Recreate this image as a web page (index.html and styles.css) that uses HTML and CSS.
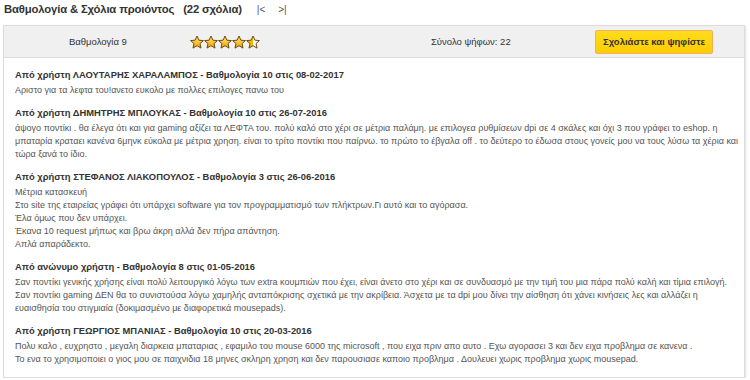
FILE: index.html
```html
<!DOCTYPE html>
<html lang="el">
<head>
  <meta charset="UTF-8">
  <title>Βαθμολογία & Σχόλια</title>
  <link rel="stylesheet" href="styles.css">
</head>
<body>

<div class="reviews-head">
  <h2>Βαθμολογία &amp; Σχόλια προιόντος <span class="count">(22 σχόλια)</span></h2>
  <a href="#" class="pager">|&lt;</a>
  <a href="#" class="pager">&gt;|</a>
</div>

<div class="reviews-box">
  <div class="summary">
    <div class="score">Βαθμολογία 9</div>
    <div class="stars">
      <svg width="70" height="16" viewBox="0 0 70 16">
        <defs>
          <linearGradient id="gold" x1="0" y1="0" x2="0" y2="1">
            <stop offset="0" stop-color="#ffe680"/>
            <stop offset="1" stop-color="#f0a400"/>
          </linearGradient>
          <linearGradient id="half" x1="0" y1="0" x2="1" y2="0">
            <stop offset="0.5" stop-color="#f5b800"/>
            <stop offset="0.5" stop-color="#ffffff"/>
          </linearGradient>
          <path id="star" d="M7 1 L8.9 5.2 L13.4 5.6 L10 8.6 L11 13.1 L7 10.7 L3 13.1 L4 8.6 L0.6 5.6 L5.1 5.2 Z"/>
        </defs>
        <use href="#star" x="0" y="1" fill="url(#gold)" stroke="#6b4a10" stroke-width="1"/>
        <use href="#star" x="14" y="1" fill="url(#gold)" stroke="#6b4a10" stroke-width="1"/>
        <use href="#star" x="28" y="1" fill="url(#gold)" stroke="#6b4a10" stroke-width="1"/>
        <use href="#star" x="42" y="1" fill="url(#gold)" stroke="#6b4a10" stroke-width="1"/>
        <use href="#star" x="56" y="1" fill="url(#half)" stroke="#6b4a10" stroke-width="1"/>
      </svg>
    </div>
    <div class="votes">Σύνολο ψήφων: 22</div>
    <a href="#" class="vote-btn">Σχολιάστε και ψηφίστε</a>
  </div>

  <div class="review-list">
    <div class="review">
      <div class="review-title">Από χρήστη ΛΑΟΥΤΑΡΗΣ ΧΑΡΑΛΑΜΠΟΣ - Βαθμολογία 10 στις 08-02-2017</div>
      <div class="review-text">Αριστο για τα λεφτα του!ανετο ευκολο με πολλες επιλογες πανω του</div>
    </div>

    <div class="review">
      <div class="review-title">Από χρήστη ΔΗΜΗΤΡΗΣ ΜΠΛΟΥΚΑΣ - Βαθμολογία 10 στις 26-07-2016</div>
      <div class="review-text">άψογο ποντίκι . θα έλεγα ότι και για gaming αξίζει τα ΛΕΦΤΑ του. πολύ καλό στο χέρι σε μέτρια παλάμη. με επιλογεα ρυθμίσεων dpi σε 4 σκάλες και όχι 3 που γράφει το eshop. η<br>μπαταρία κραταει κανένα 6μηνκ εύκολα με μέτρια χρηση. είναι το τρίτο ποντίκι που παίρνω. το πρώτο το έβγαλα off . το δεύτερο το έδωσα στους γονείς μου να τους λύσω τα χέρια και<br>τώρα ξανά το ίδιο.</div>
    </div>

    <div class="review">
      <div class="review-title">Από χρήστη ΣΤΕΦΑΝΟΣ ΛΙΑΚΟΠΟΥΛΟΣ - Βαθμολογία 3 στις 26-06-2016</div>
      <div class="review-text">Μέτρια κατασκευή<br>Στο site της εταιρείας γράφει ότι υπάρχει software για τον προγραμματισμό των πλήκτρων.Γι αυτό και το αγόρασα.<br>Έλα όμως που δεν υπάρχει.<br>Έκανα 10 request μήπως και βρω άκρη αλλά δεν πήρα απάντηση.<br>Απλά απαράδεκτο.</div>
    </div>

    <div class="review">
      <div class="review-title">Από ανώνυμο χρήστη - Βαθμολογία 8 στις 01-05-2016</div>
      <div class="review-text">Σαν ποντίκι γενικής χρήσης είναι πολύ λειτουργικό λόγω των extra κουμπιών που έχει, είναι άνετο στο χέρι και σε συνδυασμό με την τιμή του μια πάρα πολύ καλή και τίμια επιλογή.<br>Σαν ποντίκι gaming ΔΕΝ θα το συνιστούσα λόγω χαμηλής ανταπόκρισης σχετικά με την ακρίβεια. Άσχετα με τα dpi μου δίνει την αίσθηση ότι χάνει κινήσεις λες και αλλάζει η<br>ευαισθησία του στιγμιαία (δοκιμασμένο με διαφορετικά mousepads).</div>
    </div>

    <div class="review">
      <div class="review-title">Από χρήστη ΓΕΩΡΓΙΟΣ ΜΠΑΝΙΑΣ - Βαθμολογία 10 στις 20-03-2016</div>
      <div class="review-text">Πολυ καλο , ευχρηστο , μεγαλη διαρκεια μπαταριας , εφαμιλο του mouse 6000 της microsoft , που ειχα πριν απο αυτο . Εχω αγορασει 3 και δεν ειχα προβλημα σε κανενα .<br>Το ενα το χρησιμοποιει ο γιος μου σε παιχνιδια 18 μηνες σκληρη χρηση και δεν παρουσιασε καποιο προβλημα . Δουλευει χωρις προβλημα χωρις mousepad.</div>
    </div>
  </div>
</div>

</body>
</html>
```

FILE: styles.css
```css
/* Σχόλια προϊόντος */
* {
  box-sizing: border-box;
}

body {
  margin: 0;
  padding: 0 4px 0 3px;
  background: #ffffff;
  font-family: 'Liberation Sans', Arial, sans-serif;
  color: #333;
}

.reviews-head {
  display: flex;
  align-items: baseline;
  height: 25px;
  padding: 3px 0 0 1px;
}

.reviews-head h2 {
  margin: 0;
  font-size: 11.3px;
  font-weight: bold;
  color: #333;
  letter-spacing: -0.15px;
}

.reviews-head .count {
  margin-left: 6px;
}

.pager {
  margin-left: 15px;
  font-size: 10px;
  color: #555;
  text-decoration: none;
}

.pager + .pager {
  margin-left: 13px;
}

/* κουτί */
.reviews-box {
  border: 1px solid #dcdcdc;
  box-shadow: 1px 1px 2px rgba(0, 0, 0, 0.12);
  width: 742px;
  height: 353px;
  overflow: hidden;
}

.summary {
  display: grid;
  grid-template-columns: 186px 241px 164px 1fr;
  align-items: center;
  height: 32px;
  background: #f0f0f0;
  border-bottom: 1px solid #dcdcdc;
  font-size: 9.5px;
  color: #333;
}

.score {
  padding-left: 65px;
}

.stars {
  display: flex;
}

.vote-btn {
  justify-self: start;
  padding: 5px 7px 6px 7px;
  background: linear-gradient(#ffdc1e, #ffcc00);
  border: 1px solid #f0b060;
  border-radius: 2px;
  color: #333;
  font-weight: bold;
  text-decoration: none;
  font-size: 9.5px;
}

/* lista */
.review-list {
  padding: 10px 10px 0 11px;
}

.review {
  margin-bottom: 9px;
}

.review-title {
  font-weight: bold;
  font-size: 9.4px;
  color: #333;
  line-height: 14px;
  margin-bottom: 2px;
}

.review-text {
  font-size: 9px;
  line-height: 13px;
  color: #555;
  white-space: nowrap;
}
```
